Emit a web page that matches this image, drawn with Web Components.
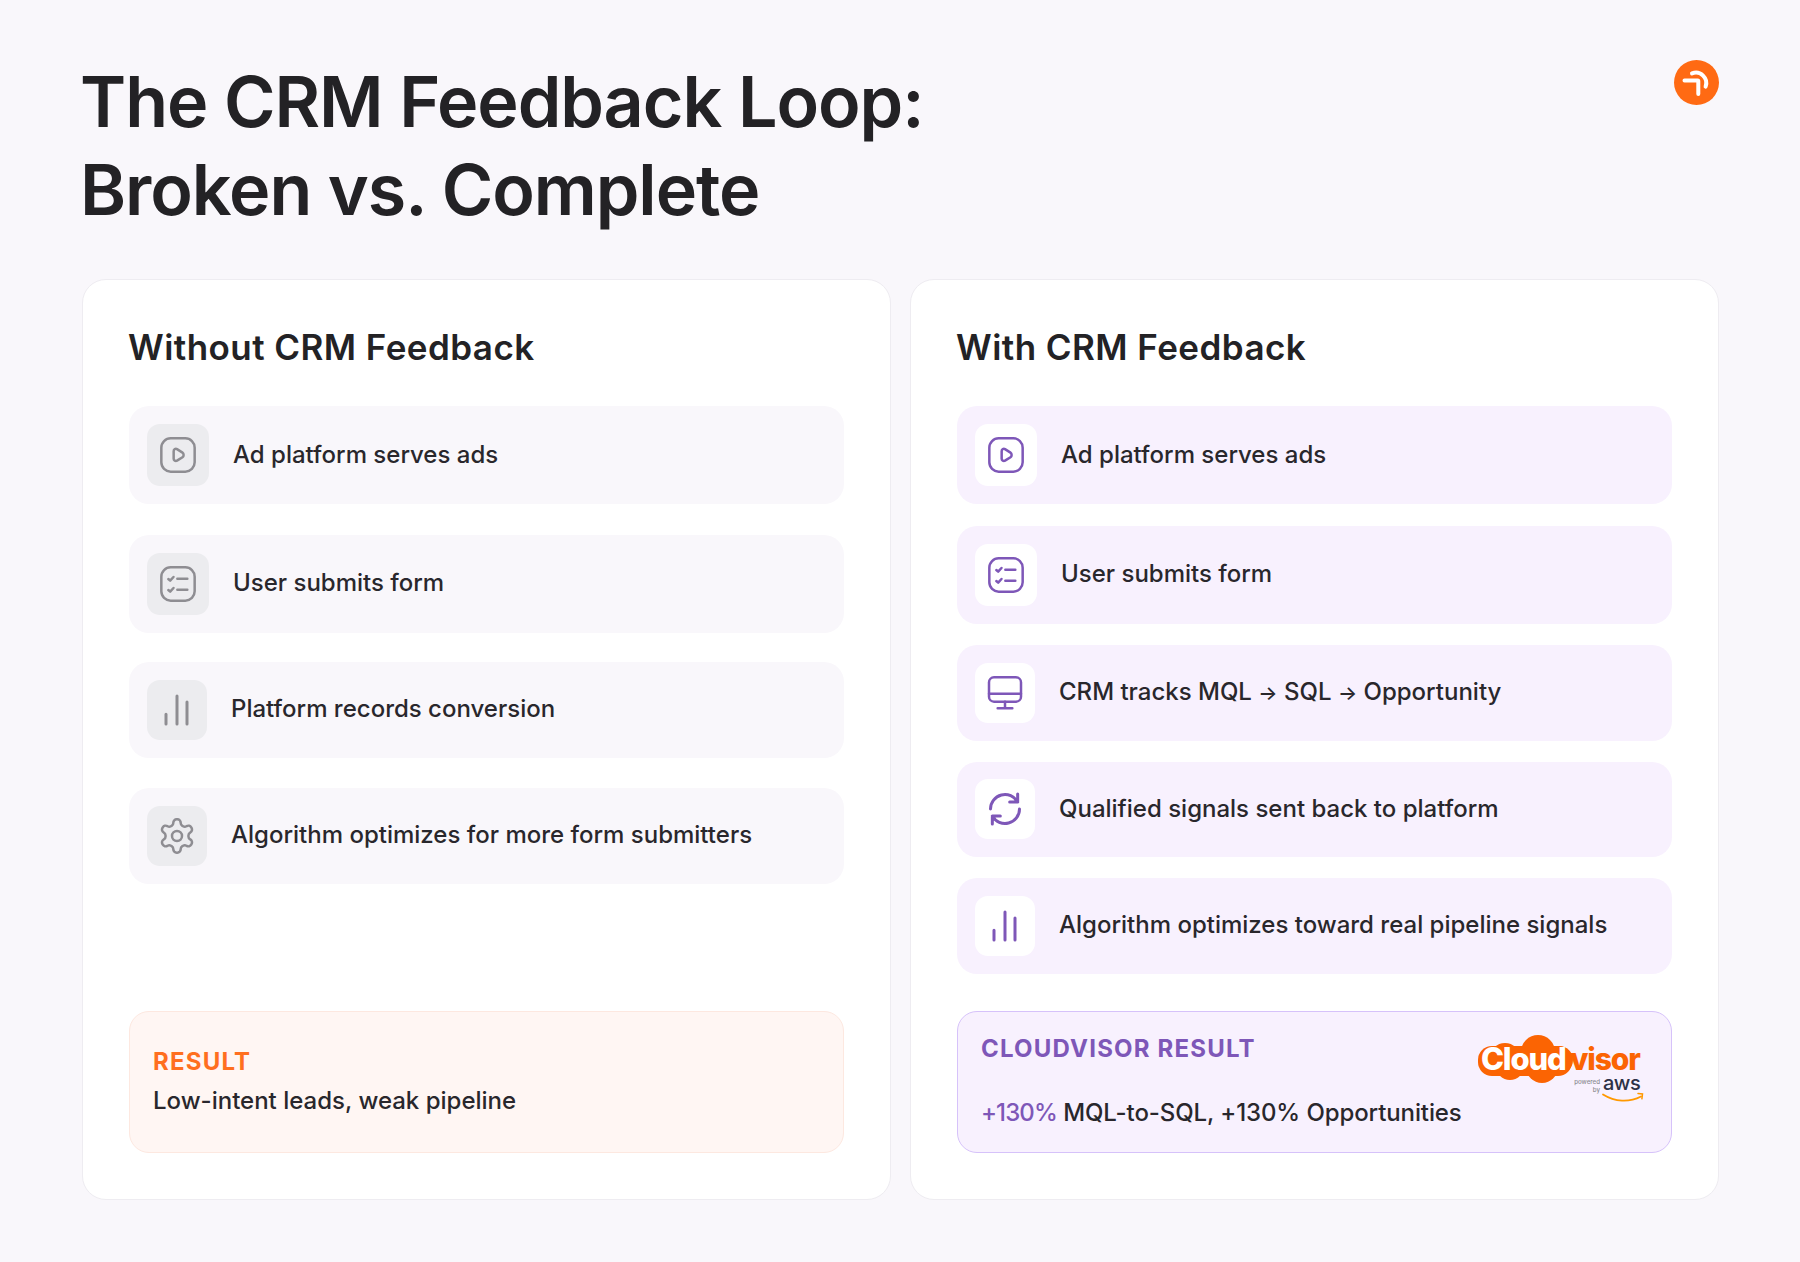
<!DOCTYPE html>
<html lang="en">
<head>
<meta charset="utf-8">
<title>The CRM Feedback Loop</title>
<style>
  html, body { margin: 0; padding: 0; background: #f9f7fb; }
  body { font-family: "Inter", "Liberation Sans", sans-serif; color: #232225; }
  .arrow { font-size: 0.84em; }
</style>
</head>
<body>
<crm-slide>
  <span slot="title">The CRM Feedback Loop:<br>Broken vs. Complete</span>

  <feedback-card heading="Without CRM Feedback">
    <flow-row icon="play">Ad platform serves ads</flow-row>
    <flow-row icon="list" style="--row-gap:30.5px">User submits form</flow-row>
    <flow-row icon="bars" compact style="--row-gap:29.5px">Platform records conversion</flow-row>
    <flow-row icon="gear" compact style="--row-gap:30.5px">Algorithm optimizes for more form submitters</flow-row>
    <result-box slot="result" label="RESULT">Low-intent leads, weak pipeline</result-box>
  </feedback-card>

  <feedback-card heading="With CRM Feedback" tone="purple">
    <flow-row tone="purple" icon="play">Ad platform serves ads</flow-row>
    <flow-row tone="purple" icon="list" style="--row-gap:21.5px">User submits form</flow-row>
    <flow-row tone="purple" icon="monitor" compact style="--row-gap:21.5px">CRM tracks MQL <span class="arrow">→</span> SQL <span class="arrow">→</span> Opportunity</flow-row>
    <flow-row tone="purple" icon="refresh" compact style="--row-gap:21px">Qualified signals sent back to platform</flow-row>
    <flow-row tone="purple" icon="bars" compact style="--row-gap:21px">Algorithm optimizes toward real pipeline signals</flow-row>
    <result-box slot="result" tone="purple" label="CLOUDVISOR RESULT"><b>+130%</b> MQL-to-SQL, +130% Opportunities<cloudvisor-logo slot="logo"></cloudvisor-logo></result-box>
  </feedback-card>
</crm-slide>

<script>
const ICONS = {
  play: `<rect x="2" y="2" width="20" height="20" rx="5.6"/><path d="M9.4 9.7c0-1.1 1.1-1.7 2-1.2l3.3 2.1c.9.6.9 2.1 0 2.7l-3.3 2.1c-.9.5-2-.1-2-1.2z"/>`,
  list: `<rect x="2" y="2" width="20" height="20" rx="5.6"/><path d="M11.6 8.8h6M11.6 15.4h6M6.2 9l1.1 1 2-2.2M6.2 15.6l1.1 1 2-2.2"/>`,
  bars: `<path stroke-width="1.8" d="M5.4 14.6v5.8M12 3.6v16.8M18 7.2v13.2"/>`,
  gear: `<path d="M12.22 2h-.44a2 2 0 0 0-2 2v.18a2 2 0 0 1-1 1.73l-.43.25a2 2 0 0 1-2 0l-.15-.08a2 2 0 0 0-2.73.73l-.22.38a2 2 0 0 0 .73 2.73l.15.1a2 2 0 0 1 1 1.72v.51a2 2 0 0 1-1 1.74l-.15.09a2 2 0 0 0-.73 2.73l.22.38a2 2 0 0 0 2.73.73l.15-.08a2 2 0 0 1 2 0l.43.25a2 2 0 0 1 1 1.73V20a2 2 0 0 0 2 2h.44a2 2 0 0 0 2-2v-.18a2 2 0 0 1 1-1.73l.43-.25a2 2 0 0 1 2 0l.15.08a2 2 0 0 0 2.73-.73l.22-.39a2 2 0 0 0-.73-2.73l-.15-.08a2 2 0 0 1-1-1.74v-.5a2 2 0 0 1 1-1.74l.15-.09a2 2 0 0 0 .73-2.73l-.22-.38a2 2 0 0 0-2.73-.73l-.15.08a2 2 0 0 1-2 0l-.43-.25a2 2 0 0 1-1-1.73V4a2 2 0 0 0-2-2z"/><circle cx="12" cy="12" r="3"/>`,
  monitor: `<rect x="2.4" y="2.6" width="19.2" height="14.6" rx="3"/><path d="M2.4 12.4h19.2M12 17.2v4M7.6 21.2h8.8"/>`,
  refresh: `<path stroke-width="1.8" d="M3.3 12A8.7 8.7 0 0 1 19.6 7.8M19.6 3v4.8h-4.8M20.7 12A8.7 8.7 0 0 1 4.4 16.2M4.4 21v-4.8h4.8"/>`
};

class CrmSlide extends HTMLElement {
  constructor() {
    super();
    this.attachShadow({ mode: "open" });
    this.shadowRoot.innerHTML = `
      <style>
        :host {
          display: block;
          box-sizing: border-box;
          width: 1800px;
          height: 1262px;
          padding: 60px 81px 60px 82px;
        }
        header {
          display: flex;
          justify-content: space-between;
          align-items: flex-start;
          height: 219px;
        }
        h1 {
          margin: -2px 0 0 -2px;
          font-size: 70px;
          font-weight: 600;
          line-height: 87.5px;
          letter-spacing: -1.05px;
          color: #232225;
        }
        .cards {
          display: grid;
          grid-template-columns: 809px 809px;
          gap: 19px;
        }
      </style>
      <header>
        <h1><slot name="title"></slot></h1>
        <brand-mark></brand-mark>
      </header>
      <div class="cards"><slot></slot></div>
    `;
  }
}

class BrandMark extends HTMLElement {
  constructor() {
    super();
    this.attachShadow({ mode: "open" });
    this.shadowRoot.innerHTML = `
      <style>
        :host { display: block; width: 45px; height: 45px; }
        svg { display: block; }
      </style>
      <svg width="45" height="45" viewBox="0 0 45 45" aria-hidden="true">
        <circle cx="22.5" cy="22.5" r="22.5" fill="#ff6a13"/>
        <path d="M10.5 20.6h13.2a.6.6 0 0 1 .6.6V34" fill="none" stroke="#fff" stroke-width="4" stroke-linecap="round"/>
        <path d="M18 13.4a10.4 10.4 0 0 1 13.6 13.2" fill="none" stroke="#fff" stroke-width="4" stroke-linecap="round"/>
      </svg>
    `;
  }
}

class FeedbackCard extends HTMLElement {
  constructor() {
    super();
    this.attachShadow({ mode: "open" });
  }

  connectedCallback() {
    this.shadowRoot.innerHTML = `
      <style>
        :host {
          display: flex;
          flex-direction: column;
          box-sizing: border-box;
          height: 921px;
          padding: 0 46px 46px 46px;
          background: #fff;
          border: 1px solid #eeecf1;
          border-radius: 24px;
        }
        h2 {
          margin: 0 0 0 -1px;
          height: 126px;
          padding-top: 43px;
          box-sizing: border-box;
          font-size: 35px;
          line-height: 48px;
          font-weight: 600;
          letter-spacing: 0.45px;
          color: #232225;
        }
        .rows { flex: 1; display: flex; flex-direction: column; }
      </style>
      <h2>${this.getAttribute("heading") || ""}</h2>
      <div class="rows"><slot></slot></div>
      <slot name="result"></slot>
    `;
  }
}

class FlowRow extends HTMLElement {
  constructor() {
    super();
    this.attachShadow({ mode: "open" });
  }

  connectedCallback() {
    const icon = ICONS[this.getAttribute("icon")] || "";
    this.shadowRoot.innerHTML = `
      <style>
        :host {
          display: flex;
          align-items: center;
          gap: 24px;
          box-sizing: border-box;
          height: 98px;
          margin-top: var(--row-gap, 0);
          padding-left: 18px;
          background: #f9f7fb;
          border-radius: 20px;
          font-size: 24px;
          font-weight: 500;
          color: #29272c;
          --box: 62px;
          --box-bg: #ececef;
          --stroke: #8e8d92;
        }
        :host([compact]) { height: 95.5px; --box: 60px; }
        :host([tone="purple"]) {
          background: #f8f1fe;
          --box-bg: #ffffff;
          --stroke: #7e57b8;
        }
        .box {
          flex: none;
          display: flex;
          align-items: center;
          justify-content: center;
          width: var(--box);
          height: var(--box);
          border-radius: 13px;
          background: var(--box-bg);
        }
        .label { padding-bottom: 2px; }
        svg {
          display: block;
          width: 40px;
          height: 40px;
          fill: none;
          stroke: var(--stroke);
          stroke-width: 1.5;
          stroke-linecap: round;
          stroke-linejoin: round;
        }
      </style>
      <span class="box"><svg viewBox="0 0 24 24" aria-hidden="true">${icon}</svg></span>
      <span class="label"><slot></slot></span>
    `;
  }
}

class ResultBox extends HTMLElement {
  constructor() {
    super();
    this.attachShadow({ mode: "open" });
  }

  connectedCallback() {
    this.shadowRoot.innerHTML = `
      <style>
        :host {
          display: flex;
          justify-content: space-between;
          box-sizing: border-box;
          height: 142px;
          padding: 36px 24px 0 23px;
          background: #fff6f3;
          border: 1px solid #fde8e0;
          border-radius: 20px;
          font-size: 24px;
          font-weight: 500;
          color: #29272c;
          --label: #ff6f1f;
          --label-gap: 11px;
          --body-spacing: normal;
        }
        :host([tone="purple"]) {
          padding-top: 23px;
          background: #f8f1fe;
          border-color: #d6c2fa;
          --label: #7e57b8;
          --label-gap: 36px;
          --body-spacing: -0.1px;
        }
        .label {
          font-weight: 700;
          letter-spacing: 0.05em;
          color: var(--label);
          line-height: 28px;
          margin-bottom: var(--label-gap);
        }
        .text { line-height: 28px; letter-spacing: var(--body-spacing); }
        ::slotted(b) { font-weight: 500; color: #7e57b8; letter-spacing: -0.9px; }
        .logo { flex: none; margin: 0 5px 0 0; }
      </style>
      <div>
        <div class="label">${this.getAttribute("label") || ""}</div>
        <div class="text"><slot></slot></div>
      </div>
      <div class="logo"><slot name="logo"></slot></div>
    `;
  }
}

class CloudvisorLogo extends HTMLElement {
  constructor() {
    super();
    this.attachShadow({ mode: "open" });
    this.shadowRoot.innerHTML = `
      <style>
        :host { display: block; width: 164px; height: 68px; }
        svg { display: block; overflow: visible; }
        text { font-family: "Inter", "Liberation Sans", sans-serif; letter-spacing: 0; }
      </style>
      <svg width="164" height="68" viewBox="0 0 164 68">
        <g fill="#fb6403">
          <rect x="0" y="11" width="94" height="30" rx="14"/>
          <circle cx="27" cy="23" r="15"/>
          <circle cx="60" cy="17" r="17"/>
          <circle cx="81" cy="25" r="14"/>
          <circle cx="32" cy="31" r="14"/>
          <circle cx="64" cy="32" r="16"/>
        </g>
        <text x="3" y="35" font-size="31" font-weight="800" fill="#fff" style="letter-spacing:-1.2px">Cloud</text>
        <text x="92" y="35" font-size="30" font-weight="800" fill="#fb6403" style="letter-spacing:-1.1px">visor</text>
        <text x="122" y="49" font-size="6.2" fill="#8b8b90" text-anchor="end">powered</text>
        <text x="122" y="57" font-size="6.2" fill="#8b8b90" text-anchor="end">by</text>
        <text x="125" y="55" font-size="20" font-weight="500" fill="#2d3146" style="letter-spacing:-0.5px">aws</text>
        <path d="M125 59.5c12 7.5 26 8.2 38 2" fill="none" stroke="#f90" stroke-width="1.8" stroke-linecap="round"/>
        <path d="M160 58.6l4.5 .4-.6 4.8" fill="none" stroke="#f90" stroke-width="1.5" stroke-linecap="round"/>
      </svg>
    `;
  }
}

customElements.define("crm-slide", CrmSlide);
customElements.define("brand-mark", BrandMark);
customElements.define("feedback-card", FeedbackCard);
customElements.define("flow-row", FlowRow);
customElements.define("result-box", ResultBox);
customElements.define("cloudvisor-logo", CloudvisorLogo);
</script>
</body>
</html>
